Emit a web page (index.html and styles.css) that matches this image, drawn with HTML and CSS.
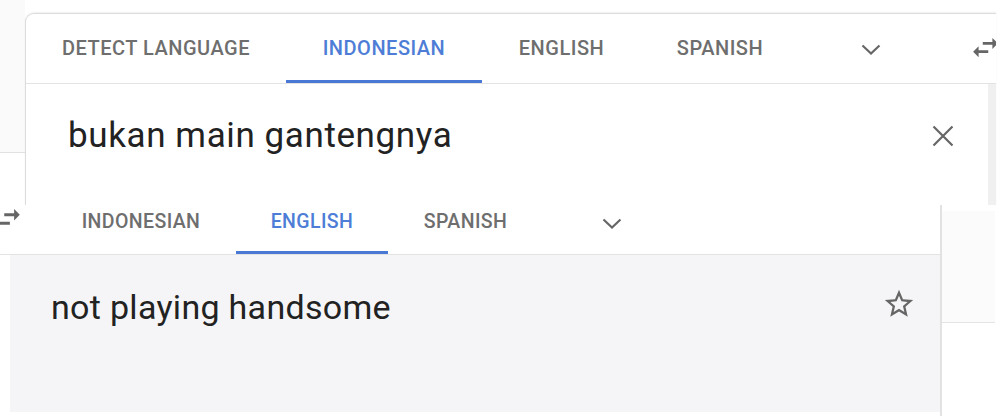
FILE: index.html
```html
<!DOCTYPE html>
<html lang="en">
<head>
<meta charset="utf-8">
<title>Translate</title>
<link rel="stylesheet" href="styles.css">
</head>
<body>
<div class="page">
  <div class="top">
    <div class="gutter"><div class="gutter-shade"></div></div>
    <div class="card">
      <div class="tabs tabs-top">
        <div class="tab w-detect">DETECT LANGUAGE</div>
        <div class="tab w-indo active">INDONESIAN</div>
        <div class="tab w-eng">ENGLISH</div>
        <div class="tab w-spa">SPANISH</div>
        <div class="more more-top">
          <svg class="chev" width="20" height="12" viewBox="0 0 20 12"><path d="M1.5 1.5 L10 9.5 L18.5 1.5" fill="none" stroke="#666" stroke-width="2.2"/></svg>
        </div>
        <svg class="swap swap-top" width="33" height="33" viewBox="0 0 24 24"><path fill="#666" d="M6.99 11L3 15l3.99 4v-3H14v-2H6.99v-3zM21 9l-3.99-4v3H10v2h7.01v3L21 9z"/></svg>
      </div>
      <div class="input-row">
        <div class="source-text">bukan main gantengnya</div>
        <svg class="close" width="22" height="22" viewBox="0 0 22 22"><path d="M1.5 1.5 L20.5 20.5 M20.5 1.5 L1.5 20.5" stroke="#666" stroke-width="2.2" fill="none"/></svg>
        <div class="scroll-strip"></div>
      </div>
    </div>
  </div>
  <div class="bottom">
    <div class="panel">
      <div class="tabs tabs-bottom">
        <svg class="swap swap-bottom" width="24" height="34" viewBox="7 0 17 24"><path fill="#666" d="M6.99 11L3 15l3.99 4v-3H14v-2H6.99v-3zM21 9l-3.99-4v3H10v2h7.01v3L21 9z"/></svg>
        <div class="tab b-indo">INDONESIAN</div>
        <div class="tab b-eng active">ENGLISH</div>
        <div class="tab b-spa">SPANISH</div>
        <div class="more more-bottom">
          <svg class="chev" width="20" height="12" viewBox="0 0 20 12"><path d="M1.5 1.5 L10 9.5 L18.5 1.5" fill="none" stroke="#666" stroke-width="2.2"/></svg>
        </div>
      </div>
      <div class="result">
        <div class="result-text">not playing handsome</div>
        <svg class="star" width="34" height="34" viewBox="0 0 24 24"><path fill="#666" d="M22 9.24l-7.19-.62L12 2 9.19 8.63 2 9.24l5.46 4.730L5.82 21 12 17.27 18.18 21l-1.63-7.03L22 9.24zM12 15.4l-3.76 2.27 1-4.28-3.32-2.88 4.38-.38L12 6.1l1.71 4.04 4.38.38-3.32 2.88 1 4.28L12 15.4z"/></svg>
      </div>
    </div>
    <div class="side">
      <div class="side-top"></div>
    </div>
  </div>
</div>
</body>
</html>
```

FILE: styles.css
```css
html, body {
  margin: 0;
  padding: 0;
  background: #ffffff;
}

.page {
  width: 1000px;
  height: 416px;
  overflow: hidden;
  font-family: Roboto, "Liberation Sans", Arial, sans-serif;
  color: #222222;
}

/* ---------- top (source) panel ---------- */
.top {
  display: flex;
  height: 205px;
}

.gutter {
  width: 25px;
  flex: none;
}

.gutter-shade {
  height: 153px;
  background: #fafafa;
  border-bottom: 1px solid #e2e2e2;
  box-sizing: border-box;
}

.card {
  flex: none;
  width: 970px;
  margin-top: 13px;
  border-top: 1px solid #dcdcdc;
  border-left: 1px solid #dcdcdc;
  border-top-left-radius: 9px;
  overflow: hidden;
  background: #ffffff;
  box-shadow: 0 -1px 2px rgba(0, 0, 0, 0.06);
}

.tabs {
  display: flex;
  border-bottom: 1px solid #e3e3e3;
  white-space: nowrap;
}

.tabs-top {
  height: 69px;
  align-items: center;
}

.tab {
  flex: none;
  text-align: center;
  font-weight: 500;
  color: #6e6e6e;
  box-sizing: border-box;
}

.tabs-top .tab {
  height: 69px;
  line-height: 69px;
  font-size: 20px;
  letter-spacing: 0.5px;
}

.tab.active {
  color: #4d7dd6;
  box-shadow: inset 0 -3px 0 #4a79d5;
}

.w-detect { width: 260px; }
.w-indo { width: 196px; }
.w-eng { width: 159px; }
.w-spa { width: 158px; }

.more {
  flex: none;
  display: flex;
  justify-content: center;
}

.more-top {
  width: 144px;
  padding-top: 3px;
}

.swap-top {
  flex: none;
  margin-left: 26px;
  margin-top: -2px;
}

.input-row {
  display: flex;
  height: 121px;
}

.source-text {
  flex: 1;
  padding: 32px 0 0 42px;
  font-size: 35px;
  line-height: 40px;
  letter-spacing: 0.6px;
  color: #222222;
}

.close {
  flex: none;
  margin-top: 41px;
  margin-right: 34px;
}

.scroll-strip {
  flex: none;
  width: 8px;
  background: #f0f0f0;
}

/* ---------- bottom (translation) panel ---------- */
.bottom {
  display: flex;
  height: 211px;
}

.panel {
  flex: none;
  width: 940px;
  border-right: 2px solid #e2e2e2;
  background: #ffffff;
}

.tabs-bottom {
  height: 49px;
  align-items: flex-start;
}

.tabs-bottom .tab {
  height: 49px;
  padding-top: 2px;
  line-height: 30px;
  font-size: 19.5px;
  letter-spacing: 0.4px;
}

.swap-bottom {
  flex: none;
  margin-top: -3px;
  margin-right: 22px;
}

.b-indo { width: 190px; }
.b-eng { width: 152px; }
.b-spa { width: 155px; }

.more-bottom {
  width: 138px;
  padding-top: 13px;
}

.result {
  display: flex;
  height: 157px;
  margin-left: 10px;
  background: #f5f5f7;
}

.result-text {
  flex: 1;
  padding: 32px 0 0 41px;
  font-size: 34px;
  line-height: 40px;
  letter-spacing: 0.3px;
  color: #222222;
}

.star {
  flex: none;
  margin-top: 32px;
  margin-right: 24px;
}

.side {
  flex: 1;
  display: flex;
  flex-direction: column;
}

.side-top {
  margin-top: 6px;
  margin-right: 5px;
  height: 111px;
  background: #fbfbfb;
  border-bottom: 1px solid #e4e4e4;
}
```
